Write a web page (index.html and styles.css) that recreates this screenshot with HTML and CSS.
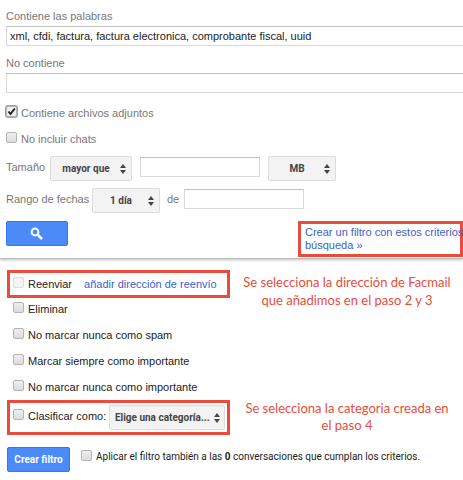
FILE: index.html
```
<!DOCTYPE html>
<html lang="es">
<head>
    <meta charset="UTF-8"/>
    <meta name="viewport" content="width=device-width, initial-scale=1.0"/>
    <title>Crear filtro</title>
    <link rel="stylesheet" href="styles.css">
</head>
<body>
<!-- Criterios de búsqueda -->
<form class="search-panel">
    <div class="field">
        <label for="has-words">Contiene las palabras</label>
        <input type="text" class="text-box" id="has-words" value="xml, cfdi, factura, factura electronica, comprobante fiscal, uuid"/>
    </div>
    <div class="field">
        <label for="not-has">No contiene</label>
        <input type="text" class="text-box" id="not-has"/>
    </div>

    <label class="check-row"><input type="checkbox" class="focused" checked/>Contiene archivos adjuntos</label>
    <label class="check-row"><input type="checkbox"/>No incluir chats</label>

    <div class="inline-row size-row">
        <label for="size-op">Tamaño</label>
        <select id="size-op" class="select-operator">
            <option>mayor que</option>
            <option>menor que</option>
        </select>
        <input type="text" class="text-box" aria-label="Valor del tamaño"/>
        <select class="select-unit" aria-label="Unidad">
            <option>MB</option>
            <option>KB</option>
        </select>
    </div>

    <div class="inline-row date-row">
        <label for="date-range">Rango de fechas</label>
        <select id="date-range" class="select-range">
            <option>1 día</option>
            <option>1 semana</option>
        </select>
        <label for="date-from">de</label>
        <input type="text" class="text-box" id="date-from"/>
    </div>

    <div class="search-actions">
        <button type="button" class="btn btn-search" aria-label="Buscar">
            <svg width="14" height="14" viewBox="0 0 14 14" fill="none" stroke="#fff">
                <circle cx="5" cy="5" r="3.4" stroke-width="2"/>
                <path d="M7.6 7.6L12 12" stroke-width="2.6"/>
            </svg>
        </button>
        <a class="highlight create-link" href="#filtro">Crear un filtro con estos criterios<br>búsqueda »</a>
    </div>
</form>

<!-- Acciones del filtro -->
<form class="filter-panel" id="filtro">
    <div class="step">
        <div class="highlight forward-box">
            <label class="check-row"><input type="checkbox" disabled/>Reenviar</label>
            <a href="#reenvio">añadir dirección de reenvío</a>
        </div>
        <p class="note">Se selecciona la dirección de Facmail<br>que añadimos en el paso 2 y 3</p>
    </div>

    <div class="options">
        <label class="check-row"><input type="checkbox"/>Eliminar</label>
        <label class="check-row"><input type="checkbox"/>No marcar nunca como spam</label>
        <label class="check-row"><input type="checkbox"/>Marcar siempre como importante</label>
        <label class="check-row"><input type="checkbox"/>No marcar nunca como importante</label>
    </div>

    <div class="step step-category">
        <div class="highlight category-box">
            <label class="check-row"><input type="checkbox"/>Clasificar como:</label>
            <select class="select-category" aria-label="Categoría">
                <option>Elige una categoría...</option>
            </select>
        </div>
        <p class="note">Se selecciona la categoria creada en<br>el paso 4</p>
    </div>

    <div class="filter-actions">
        <button type="button" class="btn btn-create">Crear filtro</button>
        <label class="check-row"><input type="checkbox"/><span>Aplicar el filtro también a las <b>0</b> conversaciones que cumplan los criterios.</span></label>
    </div>
</form>
</body>
</html>
```
FILE: styles.css
```
:root {
    --text-color: #222222;
    --label-color: #777777;
    --link-color: #3a5fcd;
    --accent: #e74c3c;
    --border-color: #d9d9d9;
    --button-bg: #4a8bf8;
    --button-border: #3079ed;
}

* {
    box-sizing: border-box;
}

body {
    margin: 0;
    font-family: "Liberation Sans", Arial, sans-serif;
    font-size: 11px;
    line-height: 14px;
    color: var(--text-color);
    background-color: #ffffff;
    overflow-x: hidden;
}

a {
    color: var(--link-color);
    text-decoration: none;
}

/* Panel superior */
.search-panel {
    padding: 9px 0 12px 6px;
    color: var(--label-color);
    border-bottom: 1px solid #bbbbbb;
    box-shadow: 0 1px 3px rgba(0, 0, 0, 0.25);
}

.field {
    margin-bottom: 10px;
}

.field label {
    display: block;
    margin-bottom: 3px;
}

.text-box {
    height: 20px;
    padding: 0 3px;
    border: 1px solid var(--border-color);
    border-top-color: #c0c0c0;
    font: inherit;
    color: var(--text-color);
    background-color: #ffffff;
}

.field .text-box {
    display: block;
    width: 100%;
    border-right: 0;
}

/* Casillas */
.check-row {
    display: flex;
    align-items: center;
    gap: 4px;
    white-space: nowrap;
}

.check-row input {
    appearance: none;
    flex: none;
    width: 11px;
    height: 11px;
    margin: 0 0 3px;
    border: 1px solid #b4b4b4;
    border-radius: 2px;
    background: linear-gradient(#eeeeee, #dcdcdc);
}

.check-row input:disabled {
    border-color: #dcdcdc;
    background: #f4f4f4;
}

.check-row input:checked {
    background: #eeeeee url("data:image/svg+xml,%3Csvg xmlns='http://www.w3.org/2000/svg' viewBox='0 0 9 9'%3E%3Cpath d='M1.5 4.5L3.5 7L7.8 1.5' fill='none' stroke='%23222' stroke-width='2'/%3E%3C/svg%3E") center / 9px 9px no-repeat;
}

.check-row input.focused {
    box-shadow: 0 0 0 1px #7ba7ee;
}

.search-panel .check-row {
    height: 16px;
    margin-bottom: 10px;
}

.search-panel .field + .check-row {
    margin-top: 12px;
}

/* Listas desplegables */
select {
    appearance: none;
    height: 25px;
    padding: 0 16px 0 6px;
    border: 1px solid #dcdcdc;
    border-radius: 2px;
    font-family: Roboto, "Liberation Sans", sans-serif;
    font-size: 10px;
    font-weight: bold;
    text-align-last: center;
    color: #444444;
    background: #f3f3f3 url("data:image/svg+xml,%3Csvg xmlns='http://www.w3.org/2000/svg' viewBox='0 0 6 10'%3E%3Cpath d='M0 4L3 0L6 4ZM0 6L3 10L6 6Z' fill='%23444'/%3E%3C/svg%3E") right 5px center / 6px 10px no-repeat;
}

.inline-row {
    display: flex;
    align-items: flex-start;
    margin-bottom: 7px;
}

.inline-row label {
    margin-top: 4px;
    white-space: nowrap;
}

.inline-row .text-box {
    margin-top: 1px;
}

.size-row {
    gap: 8px;
    margin-top: -1px;
}

.size-row label {
    width: 36px;
}

.size-row .text-box {
    width: 120px;
}

.date-row {
    margin-bottom: 8px;
}

.date-row label:first-child {
    width: 86px;
}

.date-row label + .text-box {
    width: 120px;
    margin-left: 5px;
}

.select-operator {
    width: 82px;
}

.select-unit,
.select-range {
    width: 68px;
}

.select-range {
    margin-right: 7px;
}

/* Botones */
.btn {
    height: 25px;
    border: 1px solid var(--button-border);
    border-radius: 2px;
    font-family: Roboto, "Liberation Sans", sans-serif;
    font-size: 10px;
    font-weight: bold;
    color: #ffffff;
    background-color: var(--button-bg);
}

.btn-search {
    display: flex;
    align-items: center;
    justify-content: center;
    width: 62px;
}

.search-actions {
    display: flex;
    align-items: flex-start;
    justify-content: space-between;
}

/* Recuadros de los pasos */
.highlight {
    border: 3px solid var(--accent);
}

.create-link {
    width: 165px;
    height: 36px;
    margin-bottom: -11px;
    padding: 2px 0 0 4px;
    line-height: 13px;
    white-space: nowrap;
}

/* Panel inferior */
.filter-panel {
    padding: 11px 7px;
}

.step {
    display: grid;
    grid-template-columns: 223px 1fr;
    align-items: start;
}

.step .highlight {
    display: flex;
    align-items: center;
    padding-left: 3px;
    white-space: nowrap;
}

.forward-box {
    gap: 12px;
    height: 28px;
}

.step .category-box {
    align-items: flex-start;
    gap: 3px;
    height: 35px;
    padding-top: 2px;
}

.category-box .check-row {
    margin-top: 4px;
}

.select-category {
    width: 116px;
    padding: 0 14px 0 4px;
    background-position: right 4px center;
}

.note {
    margin: 3px 0 0;
    padding-left: 8px;
    font-family: Lato, "Open Sans", sans-serif;
    font-size: 13px;
    line-height: 18px;
    text-align: center;
    color: var(--accent);
}

.step-category .note {
    margin-top: 0;
    line-height: 17px;
}

.options {
    display: grid;
    gap: 12px;
    margin: -7px 0 6px;
    padding-left: 6px;
}

.filter-actions {
    display: flex;
    align-items: flex-start;
    gap: 11px;
    margin-top: 12px;
    white-space: nowrap;
}

.btn-create {
    width: 63px;
    padding: 0;
}

.filter-actions .check-row {
    margin-top: 3px;
    font-family: Roboto, "Liberation Sans", sans-serif;
    font-size: 10px;
}
```
